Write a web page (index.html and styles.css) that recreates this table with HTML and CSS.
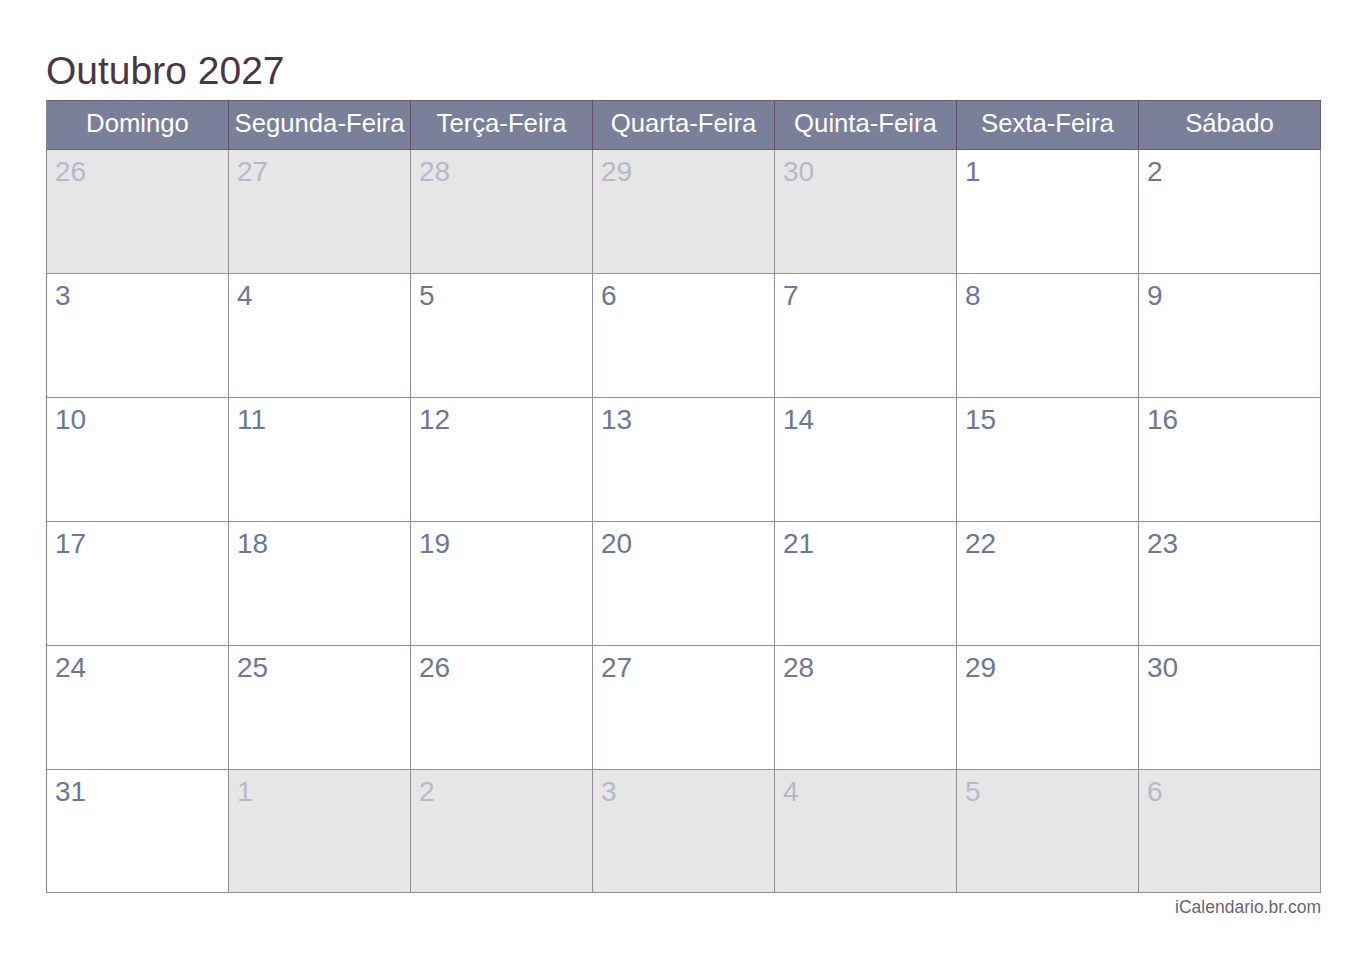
FILE: index.html
```html
<!DOCTYPE html>
<html lang="pt-BR">
<head>
<meta charset="utf-8">
<title>Outubro 2027</title>
<link rel="stylesheet" href="styles.css">
</head>
<body>
<div class="page">
  <h1 class="title">Outubro 2027</h1>
  <div class="cal">
    <div class="hd">Domingo</div>
    <div class="hd">Segunda-Feira</div>
    <div class="hd">Terça-Feira</div>
    <div class="hd">Quarta-Feira</div>
    <div class="hd">Quinta-Feira</div>
    <div class="hd">Sexta-Feira</div>
    <div class="hd">Sábado</div>

    <div class="day off">26</div>
    <div class="day off">27</div>
    <div class="day off">28</div>
    <div class="day off">29</div>
    <div class="day off">30</div>
    <div class="day">1</div>
    <div class="day">2</div>

    <div class="day">3</div>
    <div class="day">4</div>
    <div class="day">5</div>
    <div class="day">6</div>
    <div class="day">7</div>
    <div class="day">8</div>
    <div class="day">9</div>

    <div class="day">10</div>
    <div class="day">11</div>
    <div class="day">12</div>
    <div class="day">13</div>
    <div class="day">14</div>
    <div class="day">15</div>
    <div class="day">16</div>

    <div class="day">17</div>
    <div class="day">18</div>
    <div class="day">19</div>
    <div class="day">20</div>
    <div class="day">21</div>
    <div class="day">22</div>
    <div class="day">23</div>

    <div class="day">24</div>
    <div class="day">25</div>
    <div class="day">26</div>
    <div class="day">27</div>
    <div class="day">28</div>
    <div class="day">29</div>
    <div class="day">30</div>

    <div class="day">31</div>
    <div class="day off">1</div>
    <div class="day off">2</div>
    <div class="day off">3</div>
    <div class="day off">4</div>
    <div class="day off">5</div>
    <div class="day off">6</div>
  </div>
  <div class="footer">iCalendario.br.com</div>
</div>
</body>
</html>
```

FILE: styles.css
```css
html, body {
  margin: 0;
  padding: 0;
  background: #ffffff;
}

.page {
  width: 1275px;
  padding: 48px 0 0 46px;
  font-family: "Liberation Sans", Arial, sans-serif;
}

.title {
  margin: 0 0 6px 0;
  font-size: 39px;
  line-height: 46px;
  font-weight: normal;
  color: #4b3549;
}

.cal {
  display: grid;
  grid-template-columns: repeat(7, 182px);
  grid-template-rows: 50px repeat(5, 124px) 123px;
  border-left: 1px solid #8f8296;
}

.hd {
  height: 48px;
  line-height: 44px;
  text-align: center;
  background: #7a8099;
  color: #ffffff;
  font-size: 25.7px;
  border-top: 1px solid #6c5c70;
  border-right: 1px solid #5f5068;
  border-bottom: 1px solid #6c5c70;
  white-space: nowrap;
  overflow: hidden;
}

.cal .hd:nth-child(7) {
  border-right-color: #6c5c70;
}

.day {
  box-sizing: border-box;
  padding: 8px 0 0 8px;
  font-size: 28px;
  line-height: 28px;
  color: #6e7894;
  background: #ffffff;
  border-right: 1px solid #978a9b;
  border-bottom: 1px solid #978a9b;
}

.day.off {
  background: #e6e6e6;
  color: #b5b9cc;
}

.footer {
  margin-top: 3px;
  text-align: right;
  font-size: 17.5px;
  line-height: 22px;
  color: #6d6470;
}
```
